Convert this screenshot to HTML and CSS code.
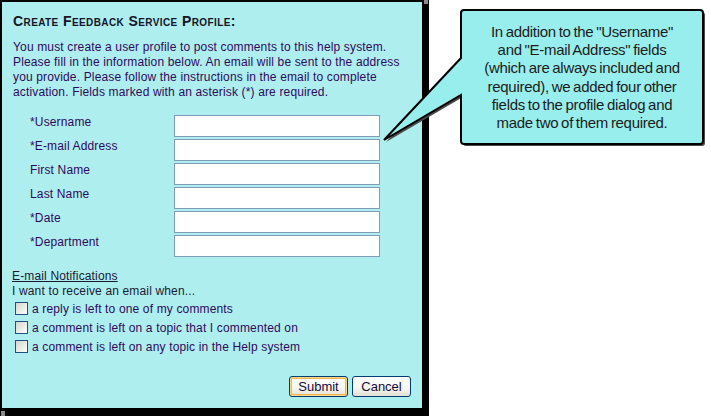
FILE: index.html
```html
<!DOCTYPE html>
<html>
<head>
<meta charset="utf-8">
<link rel="stylesheet" href="styles.css">
</head>
<body>
<div class="page">
  <div class="dialog">
    <h1 class="title">Create Feedback Service Profile:</h1>
    <p class="intro">You must create a user profile to post comments to this help system.<br>Please fill in the information below. An email will be sent to the address<br>you provide. Please follow the instructions in the email to complete<br>activation. Fields marked with an asterisk (*) are required.</p>
    <div class="fields">
      <label class="lbl">*Username</label><input class="txt" type="text">
      <label class="lbl">*E-mail Address</label><input class="txt" type="text">
      <label class="lbl">First Name</label><input class="txt" type="text">
      <label class="lbl">Last Name</label><input class="txt" type="text">
      <label class="lbl">*Date</label><input class="txt" type="text">
      <label class="lbl">*Department</label><input class="txt" type="text">
    </div>
    <div class="notify">
      <div class="notify-head">E-mail Notifications</div>
      <div class="notify-sub">I want to receive an email when...</div>
      <label class="chk"><input class="box" type="checkbox"><span>a reply is left to one of my comments</span></label>
      <label class="chk"><input class="box" type="checkbox"><span>a comment is left on a topic that I commented on</span></label>
      <label class="chk"><input class="box" type="checkbox"><span>a comment is left on any topic in the Help system</span></label>
    </div>
    <div class="actions">
      <button class="btn btn-default" type="button">Submit</button>
      <button class="btn" type="button">Cancel</button>
    </div>
  </div>
  <div class="callout">
    <svg class="callout-shape" width="331" height="150" viewBox="380 0 331 150">
      <path transform="translate(2,2)" fill="#4a4a4a" d="M464 10 H700 Q703 10 703 13 V141 Q703 144 700 144 H464 Q461 144 461 141 V95 L384 140 L461 58 V13 Q461 10 464 10 Z"/>
      <path fill="#98eeec" stroke="#000" stroke-width="2" stroke-linejoin="miter" d="M464 10 H700 Q703 10 703 13 V141 Q703 144 700 144 H464 Q461 144 461 141 V95 L384 140 L461 58 V13 Q461 10 464 10 Z"/>
    </svg>
    <div class="callout-text">In addition to the "Username"<br>and "E-mail Address" fields<br>(which are always included and<br>required), we added four other<br>fields to the profile dialog and<br>made two of them required.</div>
  </div>
</div>
</body>
</html>
```

FILE: styles.css
```css
html, body {
  margin: 0;
  padding: 0;
  background: #ffffff;
}

.page {
  position: relative;
  width: 711px;
  height: 416px;
  overflow: hidden;
  font-family: "Liberation Sans", Arial, sans-serif;
}

.dialog {
  position: relative;
  width: 398px;
  height: 395px;
  padding: 11px 11px 0 11px;
  background: #afeeee;
  border-style: solid;
  border-color: #000;
  border-width: 2px 7px 8px 2px;
  color: #2e0a5e;
  font-size: 12px;
  letter-spacing: 0.15px;
}

.dialog::before {
  content: "";
  position: absolute;
  top: -2px;
  left: 422px;
  width: 4px;
  height: 4px;
  background: #8a8a8a;
}

.dialog::after {
  content: "";
  position: absolute;
  top: 409px;
  left: -1px;
  width: 4px;
  height: 5px;
  background: #8a8a8a;
}

.title {
  margin: 0;
  font-size: 14px;
  line-height: 16px;
  font-weight: bold;
  font-variant: small-caps;
  letter-spacing: 0.4px;
  color: #15152a;
}

.intro {
  margin: 11px 0 0 0;
  line-height: 15px;
}

.fields {
  margin: 15px 0 0 17px;
  display: grid;
  grid-template-columns: 144px 206px;
  grid-auto-rows: 22px;
  row-gap: 2px;
  align-items: start;
}

.lbl {
  line-height: 15px;
}

.txt {
  appearance: none;
  -webkit-appearance: none;
  box-sizing: border-box;
  width: 206px;
  height: 22px;
  margin: 0;
  padding: 0 3px;
  border: 1px solid #7f9db9;
  background: #ffffff;
  font: 12px "Liberation Sans", Arial, sans-serif;
}

.notify {
  margin-top: 11px;
  margin-left: -1px;
}

.notify-head {
  line-height: 16px;
  text-decoration: underline;
  color: #1a1a33;
}

.notify-sub {
  line-height: 15px;
  color: #1a1a33;
}

.chk {
  display: flex;
  align-items: center;
  height: 19px;
}

.box {
  appearance: none;
  -webkit-appearance: none;
  box-sizing: border-box;
  width: 13px;
  height: 13px;
  margin: 0 4px 0 3px;
  border: 1px solid #1c5180;
  background: linear-gradient(135deg, #d6d6cf 0%, #f2f2ee 70%, #ffffff 100%);
}

.actions {
  margin-top: 20px;
  display: flex;
  justify-content: flex-end;
  gap: 4px;
}

.btn {
  box-sizing: border-box;
  width: 59px;
  height: 21px;
  margin: 0;
  padding: 0;
  border: 1px solid #003c74;
  border-radius: 3px;
  background: linear-gradient(#ffffff 0%, #f6f5f0 60%, #e3e0d3 100%);
  font: 13px "Liberation Sans", Arial, sans-serif;
  color: #1a0a3a;
}

.btn-default {
  box-shadow: inset 0 0 0 1px #ffd88a, inset 0 0 0 2px #f5b54a;
}

.callout {
  position: absolute;
  left: 380px;
  top: 0;
  width: 331px;
  height: 150px;
}

.callout-shape {
  position: absolute;
  left: 0;
  top: 0;
}

.callout-text {
  position: relative;
  margin-left: 81px;
  width: 242px;
  padding-top: 23px;
  text-align: center;
  font-size: 15px;
  line-height: 18.2px;
  letter-spacing: -0.3px;
  word-spacing: -1px;
  color: #1c1c1c;
}
```
